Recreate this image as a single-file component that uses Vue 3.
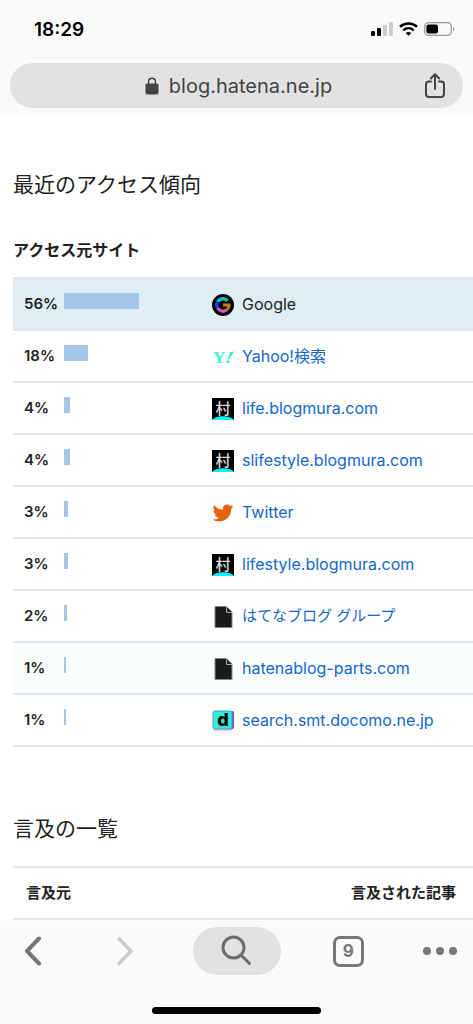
<template>
  <div class="browser">
    <header class="top-bar">
      <div class="status">
        <time class="clock">18:29</time>
        <div class="status-icons">
          <svg width="22" height="14" viewBox="0 0 22 14" aria-label="Signal">
            <rect x="0" y="9" width="4" height="5" rx="1" fill="#000" />
            <rect x="6" y="6" width="4" height="8" rx="1" fill="#000" />
            <rect x="12" y="3" width="4" height="11" rx="1" fill="#ccc" />
            <rect x="18" y="0" width="4" height="14" rx="1" fill="#ccc" />
          </svg>
          <svg width="19" height="14" viewBox="0 0 19 14" fill="none" stroke="#000" stroke-width="2.6" aria-label="Wi-Fi">
            <path d="M1 4.8C5.8 .3 13.2 .3 18 4.8" />
            <path d="M4.2 8.4C7.3 5.6 11.7 5.6 14.8 8.4" />
            <path d="M9.5 13.8L6.7 11C8.3 9.6 10.7 9.6 12.3 11Z" fill="#000" stroke="none" />
          </svg>
          <svg width="31" height="14" viewBox="0 0 31 14" aria-label="Battery">
            <rect x=".7" y=".7" width="26.6" height="12.6" rx="3.8" fill="none" stroke="#999" stroke-width="1.3" />
            <rect x="2.4" y="2.4" width="11.6" height="9.2" rx="2" fill="#000" />
            <path d="M29 4.7C30.9 5.3 30.9 8.7 29 9.3Z" fill="#999" />
          </svg>
        </div>
      </div>
      <div class="address-bar">
        <button class="address" type="button">
          <svg width="14" height="18" viewBox="0 0 14 18" aria-hidden="true">
            <path d="M3.6 8V4.6a3.4 3.4 0 0 1 6.8 0V8" fill="none" stroke="#444" stroke-width="1.4" />
            <rect x=".5" y="6.5" width="13" height="11" rx="1.8" fill="#444" />
          </svg>
          <span>blog.hatena.ne.jp</span>
        </button>
        <button class="share" type="button" aria-label="Share">
          <svg width="20" height="26" viewBox="0 0 20 26" fill="none" stroke="#444" stroke-width="2" stroke-linecap="round" stroke-linejoin="round">
            <path d="M6 8.5H4a3 3 0 0 0-3 3V21a3 3 0 0 0 3 3h12a3 3 0 0 0 3-3v-9.500a3 3 0 0 0-3-3h-2" />
            <path d="M10 16V1.500M5.800 5.500L10 1.300l4.200 4.200" />
          </svg>
        </button>
      </div>
    </header>

    <main class="content">
      <section>
        <h2>最近のアクセス傾向</h2>
        <h3>アクセス元サイト</h3>
        <table class="sites">
          <tbody>
            <tr v-for="site in sites" :key="site.name" :class="site.state">
              <th scope="row">
                <div class="share-cell">
                  <span class="percent">{{ site.percent }}%</span>
                  <span class="bar" :style="{ width: barWidth(site.percent) }"></span>
                </div>
              </th>
              <td>
                <div class="site-cell">
                  <svg class="favicon" width="22" height="22" viewBox="0 0 22 22" aria-hidden="true">
                    <g v-if="site.icon === 'google'" fill="none" stroke-width="3.4">
                      <circle cx="11" cy="11" r="11" fill="#000" />
                      <path d="M15.600 6.800A6.200 6.200 0 0 0 5.700 7.800" stroke="#16bfd0" />
                      <path d="M5.700 7.800A6.200 6.200 0 0 0 5.600 14" stroke="#1438f5" />
                      <path d="M5.600 14A6.200 6.200 0 0 0 14.900 15.800" stroke="#d153bd" />
                      <path d="M14.900 15.800A6.200 6.200 0 0 0 17.100 11H11" stroke="#c87a14" stroke-width="3" />
                    </g>
                    <g v-else-if="site.icon === 'yahoo'" fill="#3cf5d0">
                      <text x="1" y="17" class="yahoo-y">Y</text>
                      <path d="M18 6L22 5.500L17.400 13.200H15.800ZM15 14.500h2.800l-1 2.500H14Z" />
                    </g>
                    <g v-else-if="site.icon === 'mura'">
                      <rect width="22" height="22" fill="#000" />
                      <path d="M0 22C4 17 18 17 22 22Z" fill="#00f7f7" />
                      <text x="11" y="16" class="mura">村</text>
                    </g>
                    <path
                      v-else-if="site.icon === 'twitter'"
                      fill="#e5600f"
                      d="M21.500 4.500c-.8.400-1.600.600-2.400.700.9-.5 1.500-1.300 1.800-2.300-.8.500-1.700.800-2.700 1A4.300 4.300 0 0 0 10.900 7.800C7.300 7.600 4.200 5.900 2 3.300.900 5.300 1.500 7.700 3.300 9c-.7 0-1.300-.2-1.900-.5 0 2 1.400 3.800 3.400 4.200-.6.200-1.300.2-1.900.1.500 1.700 2.100 2.900 4 2.900A8.600 8.600 0 0 1 .6 17.500c7.900 4.900 18.600-.200 18.700-10.800.8-.6 1.600-1.300 2.200-2.200Z"
                    />
                    <g v-else-if="site.icon === 'file'">
                      <path d="M3 .5h11.500L20 6v15.500H3Z" fill="#1b1b1b" stroke="#888" />
                      <path d="M14.500 1v5.500H20" fill="#222" stroke="#aaa" />
                    </g>
                    <g v-else>
                      <rect x="1.500" y="1" width="19" height="20" rx="2" fill="#ffc5b8" />
                      <rect x="2" y="1" width="20" height="18" rx="2" fill="#7547ed" />
                      <rect x="1" y="1" width="19" height="18" rx="2" fill="#35edcf" stroke="#5092e8" />
                      <text x="11" y="16" class="docomo">d</text>
                    </g>
                  </svg>
                  <a v-if="site.link" href="#" :class="{ kana: site.kana }">{{ site.name }}</a>
                  <span v-else>{{ site.name }}</span>
                </div>
              </td>
            </tr>
          </tbody>
        </table>
      </section>

      <section class="mentions">
        <h2>言及の一覧</h2>
        <table class="mention-list">
          <thead>
            <tr>
              <th scope="col">言及元</th>
              <th scope="col" class="article">言及された記事</th>
            </tr>
          </thead>
        </table>
      </section>
    </main>

    <footer class="bottom-bar">
      <nav class="toolbar">
        <button type="button" aria-label="Back">
          <svg width="18" height="30" viewBox="0 0 18 30" fill="none" stroke="#777" stroke-width="4" stroke-linecap="round" stroke-linejoin="round">
            <path d="M15 2.500L3 15l12 12.500" />
          </svg>
        </button>
        <button type="button" aria-label="Forward" disabled>
          <svg width="18" height="30" viewBox="0 0 18 30" fill="none" stroke="#ccc" stroke-width="3.500" stroke-linecap="round" stroke-linejoin="round">
            <path d="M3 2.500L15 15L3 27.500" />
          </svg>
        </button>
        <button class="search" type="button" aria-label="Search">
          <svg width="32" height="32" viewBox="0 0 32 32" fill="none" stroke="#6c6c6c" stroke-width="3" stroke-linecap="round">
            <circle cx="12.500" cy="12.500" r="10.500" />
            <path d="M20.300 20.300L28.500 28.500" />
          </svg>
        </button>
        <button type="button" aria-label="9 tabs">
          <span class="tab-count">9</span>
        </button>
        <button type="button" aria-label="More">
          <svg width="34" height="8" viewBox="0 0 34 8" fill="#777">
            <circle cx="4" cy="4" r="4" />
            <circle cx="17" cy="4" r="4" />
            <circle cx="30" cy="4" r="4" />
          </svg>
        </button>
      </nav>
      <div class="home-indicator"></div>
    </footer>
  </div>
</template>

<script setup>
const sites = [
  { percent: 56, name: 'Google', icon: 'google', link: false, state: 'selected' },
  { percent: 18, name: 'Yahoo!検索', icon: 'yahoo', link: true },
  { percent: 4, name: 'life.blogmura.com', icon: 'mura', link: true },
  { percent: 4, name: 'slifestyle.blogmura.com', icon: 'mura', link: true },
  { percent: 3, name: 'Twitter', icon: 'twitter', link: true },
  { percent: 3, name: 'lifestyle.blogmura.com', icon: 'mura', link: true },
  { percent: 2, name: 'はてなブログ グループ', icon: 'file', link: true, kana: true },
  { percent: 1, name: 'hatenablog-parts.com', icon: 'file', link: true, state: 'tinted' },
  { percent: 1, name: 'search.smt.docomo.ne.jp', icon: 'docomo', link: true },
];

const barWidth = (percent) => `${Math.ceil(percent * 1.33)}px`;
</script>

<style>
body {
  margin: 0;
  background: #fff;
}
</style>

<style scoped>
.browser {
  display: flex;
  flex-direction: column;
  height: 100vh;
  overflow: hidden;
  font-family: Inter, 'Noto Sans CJK JP', sans-serif;
  color: #222;
}
button {
  display: flex;
  align-items: center;
  justify-content: center;
  padding: 0;
  border: none;
  background: transparent;
  font-family: inherit;
  cursor: pointer;
}
svg {
  display: block;
  flex: none;
}

.top-bar {
  flex: none;
  padding: 0 10px 8px;
  background: #fafafa;
}
.status {
  display: flex;
  align-items: center;
  justify-content: space-between;
  height: 58px;
  margin-bottom: 5px;
  padding: 0 8px 0 24px;
}
.clock {
  color: #000;
  font-size: 19px;
  font-weight: 600;
}
.status-icons {
  display: flex;
  align-items: center;
  gap: 6px;
}
.address-bar {
  display: grid;
  grid-template-columns: 1fr auto 1fr;
  align-items: center;
  height: 45px;
  padding: 0 18px 0 22px;
  border-radius: 23px;
  background: #e2e2e2;
}
.address {
  grid-column: 2;
  gap: 10px;
  color: #444;
  font-size: 20px;
}
.share {
  justify-self: end;
}

.content {
  flex: 1;
  min-height: 0;
  overflow: hidden;
  padding: 53px 0 0 13px;
}
h2 {
  margin: 0;
  font-size: 21px;
  line-height: 32px;
  font-weight: 400;
}
h3 {
  margin: 37px 0 15px;
  font-size: 16px;
  line-height: 24px;
  font-weight: 700;
}
table {
  width: 100%;
  border-spacing: 0;
  border-top: 2px solid #dfe7ea;
}
th,
td {
  padding: 14px 0;
  border-bottom: 2px solid #dfe7ea;
  line-height: 22px;
  text-align: left;
}
.sites th {
  width: 40%;
  padding-left: 11px;
  box-sizing: border-box;
}
.sites td {
  padding-left: 15px;
}
.selected {
  background: #dfeef5;
}
.tinted {
  background: #fafdfd;
}
.share-cell {
  display: flex;
  align-items: flex-start;
}
.percent {
  width: 40px;
  font-size: 15px;
  font-weight: 600;
}
.bar {
  height: 16px;
  background: #a4c6e8;
}
.site-cell {
  display: flex;
  align-items: center;
  gap: 8px;
  height: 22px;
  font-size: 16px;
  white-space: nowrap;
}
.site-cell a {
  color: #1268cc;
  text-decoration: none;
}
.site-cell .kana {
  font-size: 15px;
}
.favicon {
  margin-top: 2px;
  overflow: visible;
}
.yahoo-y {
  font: bold 17px 'Liberation Serif', serif;
}
.mura {
  fill: #ddd;
  font: 500 15px 'Noto Sans CJK JP', sans-serif;
  text-anchor: middle;
}
.docomo {
  fill: #000;
  font: 800 18px Inter, sans-serif;
  text-anchor: middle;
}

.mentions {
  margin-top: 66px;
}
.mention-list {
  margin-top: 21px;
}
.mention-list th {
  padding-left: 13px;
  font-size: 15px;
  font-weight: 700;
}
.mention-list .article {
  padding-right: 17px;
  text-align: right;
}

.bottom-bar {
  flex: none;
  display: flex;
  flex-direction: column;
  gap: 32px;
  padding: 6px 9px 10px;
  background: #fafafa;
}
.toolbar {
  display: flex;
  align-items: center;
  justify-content: space-between;
}
.toolbar button {
  width: 48px;
  height: 48px;
}
.toolbar .search {
  width: 88px;
  border-radius: 24px;
  background: #e2e2e2;
}
.tab-count {
  box-sizing: border-box;
  width: 31px;
  height: 31px;
  border: 3px solid #777;
  border-radius: 7px;
  color: #777;
  font-size: 17px;
  line-height: 25px;
  font-weight: 700;
  text-align: center;
}
.home-indicator {
  align-self: center;
  width: 169px;
  height: 7px;
  border-radius: 4px;
  background: #000;
}
</style>
